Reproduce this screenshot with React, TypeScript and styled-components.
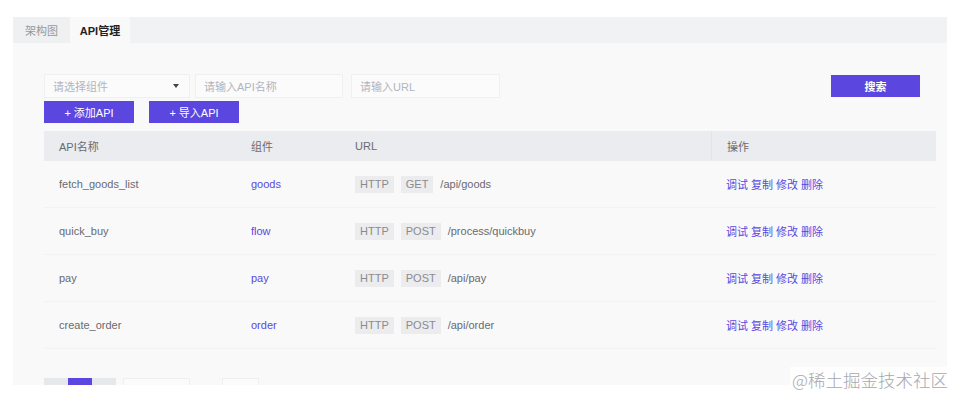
import { createGlobalStyle } from 'styled-components';
import styled from 'styled-components';

const GlobalStyle = createGlobalStyle`
  body {
    margin: 0;
    background: #ffffff;
    font-family: "Liberation Sans", "Noto Sans CJK SC", sans-serif;
  }
`;

const PURPLE = '#5b47e0';

const Page = styled.div`
  position: relative;
  width: 965px;
  height: 402px;
  padding: 17px 0 0 13px;
  box-sizing: border-box;
`;

const Panel = styled.div`
  width: 934px;
  height: 368px;
  overflow: hidden;
  background: #f9f9fa;
`;

const TabBar = styled.div`
  display: flex;
  height: 26px;
  background: #f1f2f4;
`;

const Tab = styled.div<{ $active?: boolean }>`
  display: flex;
  align-items: center;
  justify-content: center;
  width: ${({ $active }) => ($active ? '60px' : '57px')};
  font-size: 11px;
  color: ${({ $active }) => ($active ? '#222' : '#999')};
  font-weight: ${({ $active }) => ($active ? 700 : 400)};
  background: ${({ $active }) => ($active ? '#f9f9fa' : '#eef0f2')};
`;

const Content = styled.div`
  padding: 31px 11px 0 31px;
`;

const FilterRow = styled.div`
  display: flex;
  align-items: flex-start;
  height: 24px;
`;

const Field = styled.div<{ $width: number; $gap?: number }>`
  display: flex;
  align-items: center;
  justify-content: space-between;
  box-sizing: border-box;
  width: ${({ $width }) => $width}px;
  height: 24px;
  margin-right: ${({ $gap = 0 }) => $gap}px;
  padding: 0 10px 0 8px;
  background: #fbfbfc;
  border: 1px solid #eef0f2;
  font-size: 11px;
  color: #b4b4bc;
`;

const Caret = styled.span`
  width: 0;
  height: 0;
  border-left: 3.5px solid transparent;
  border-right: 3.5px solid transparent;
  border-top: 4px solid #444;
`;

const Spacer = styled.div`
  flex: 1;
`;

const PrimaryButton = styled.button<{ $width: number; $bold?: boolean }>`
  display: flex;
  align-items: center;
  justify-content: center;
  width: ${({ $width }) => $width}px;
  height: 22px;
  margin-top: 1px;
  padding: 0;
  border: none;
  background: ${PURPLE};
  color: #fff;
  font-family: inherit;
  font-size: 11px;
  font-weight: ${({ $bold }) => ($bold ? 700 : 400)};
`;

const SearchButton = styled(PrimaryButton)`
  margin-right: 16px;
`;

const ActionRow = styled.div`
  display: flex;
  gap: 15px;
  margin-top: 2px;
`;

const Table = styled.div`
  margin-top: 8px;
  width: 892px;
`;

const Row = styled.div<{ $head?: boolean }>`
  display: grid;
  grid-template-columns: 192px 104px 371px 1fr;
  height: ${({ $head }) => ($head ? '30px' : '47px')};
  background: ${({ $head }) => ($head ? '#ebecef' : 'transparent')};
  border-bottom: 1px solid ${({ $head }) => ($head ? '#ebecef' : '#f3f3f5')};
  box-sizing: border-box;
`;

const Cell = styled.div<{ $accent?: boolean; $divider?: boolean }>`
  display: flex;
  align-items: center;
  gap: 7px;
  padding-left: 15px;
  font-size: 11px;
  color: ${({ $accent }) => ($accent ? PURPLE : '#6a6a6e')};
  border-left: ${({ $divider }) => ($divider ? '1px solid #e3e4e8' : 'none')};
`;

const Tag = styled.span`
  display: inline-flex;
  align-items: center;
  height: 17px;
  padding: 0 5px;
  background: #ececee;
  color: #8a8a8e;
  font-size: 11px;
`;

const Links = styled.div`
  display: flex;
  gap: 3px;
`;

const Link = styled.span`
  color: ${PURPLE};
  font-size: 11px;
`;

const Pager = styled.div`
  display: flex;
  align-items: flex-start;
  margin-top: 29px;
`;

const PageBtn = styled.div<{ $active?: boolean }>`
  width: 24px;
  height: 22px;
  background: ${({ $active }) => ($active ? PURPLE : '#e7e8eb')};
`;

const PagerBox = styled.div<{ $width: number; $gap: number }>`
  width: ${({ $width }) => $width}px;
  height: 22px;
  margin-left: ${({ $gap }) => $gap}px;
  box-sizing: border-box;
  border: 1px solid #efeff2;
  background: #fbfbfc;
`;

const Watermark = styled.div`
  position: absolute;
  right: 15px;
  bottom: 10px;
  padding: 0 2px;
  font-size: 17.5px;
  color: #a8a8ad;
  font-family: "Noto Sans CJK SC", sans-serif;
  font-weight: 300;
  background: rgba(255, 255, 255, 0.75);
`;

const rows = [
  { name: 'fetch_goods_list', comp: 'goods', method: 'GET', path: '/api/goods' },
  { name: 'quick_buy', comp: 'flow', method: 'POST', path: '/process/quickbuy' },
  { name: 'pay', comp: 'pay', method: 'POST', path: '/api/pay' },
  { name: 'create_order', comp: 'order', method: 'POST', path: '/api/order' },
];

export default function App() {
  return (
    <>
      <GlobalStyle />
      <Page>
        <Panel>
          <TabBar>
            <Tab>架构图</Tab>
            <Tab $active>API管理</Tab>
          </TabBar>
          <Content>
            <FilterRow>
              <Field $width={146} $gap={5}>
                请选择组件
                <Caret />
              </Field>
              <Field $width={148} $gap={8}>请输入API名称</Field>
              <Field $width={149}>请输入URL</Field>
              <Spacer />
              <SearchButton $width={89} $bold>搜索</SearchButton>
            </FilterRow>
            <ActionRow>
              <PrimaryButton $width={90}>+ 添加API</PrimaryButton>
              <PrimaryButton $width={90}>+ 导入API</PrimaryButton>
            </ActionRow>
            <Table>
              <Row $head>
                <Cell>API名称</Cell>
                <Cell>组件</Cell>
                <Cell>URL</Cell>
                <Cell $divider>操作</Cell>
              </Row>
              {rows.map((r) => (
                <Row key={r.name}>
                  <Cell>{r.name}</Cell>
                  <Cell $accent>{r.comp}</Cell>
                  <Cell>
                    <Tag>HTTP</Tag>
                    <Tag>{r.method}</Tag>
                    {r.path}
                  </Cell>
                  <Cell>
                    <Links>
                      <Link>调试</Link>
                      <Link>复制</Link>
                      <Link>修改</Link>
                      <Link>删除</Link>
                    </Links>
                  </Cell>
                </Row>
              ))}
            </Table>
            <Pager>
              <PageBtn />
              <PageBtn $active />
              <PageBtn />
              <PagerBox $width={67} $gap={7} />
              <PagerBox $width={37} $gap={32} />
            </Pager>
          </Content>
        </Panel>
        <Watermark>@稀土掘金技术社区</Watermark>
      </Page>
    </>
  );
}
